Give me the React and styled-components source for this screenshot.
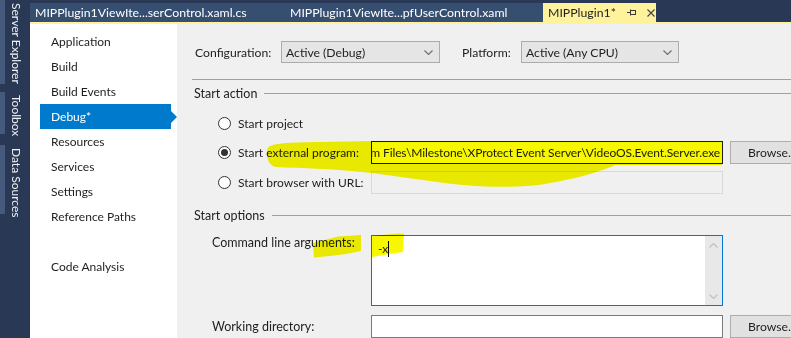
import React from 'react';
import styled, { createGlobalStyle } from 'styled-components';

const FONT = `Lato, "Noto Sans", "DejaVu Sans", sans-serif`;

const Global = createGlobalStyle`
  html, body { margin: 0; padding: 0; background: #293955; }
  body { font-family: ${FONT}; font-size: 12px; color: #1e1e1e; }
  * { box-sizing: border-box; }
`;

const Frame = styled.div`
  position: relative;
  width: 791px;
  height: 338px;
  overflow: hidden;
  display: flex;
  background: #293955;
`;

const SideStrip = styled.div`
  width: 30px;
  flex: none;
  display: flex;
  flex-direction: column;
  background: #293955;
`;

const SideTab = styled.div`
  writing-mode: vertical-rl;
  height: ${(p) => p.$h}px;
  margin-top: ${(p) => p.$mt || 0}px;
  border-left: 5px solid #465a7e;
  padding: 3px 6px 0 0;
  line-height: 16px;
  color: #f1f1f1;
  font-size: 12px;
  white-space: nowrap;
`;

const Main = styled.div`
  flex: 1;
  min-width: 0;
  display: flex;
  flex-direction: column;
`;

const TabBar = styled.div`
  height: 24px;
  flex: none;
  padding-top: 3px;
  display: flex;
  background: #293955;
  border-bottom: 2px solid #fff29d;
`;

const DocTab = styled.div`
  width: ${(p) => p.$w}px;
  height: 19px;
  line-height: 19px;
  padding-left: 5px;
  display: flex;
  align-items: center;
  gap: 11px;
  white-space: nowrap;
  overflow: hidden;
  font-size: 12.3px;
  background: ${(p) => (p.$active ? '#fff29d' : '#364e6f')};
  color: ${(p) => (p.$active ? '#1e1e1e' : '#ffffff')};
`;

const Body = styled.div`
  flex: 1;
  display: flex;
  min-height: 0;
`;

const Nav = styled.div`
  width: 147px;
  flex: none;
  background: #ffffff;
  padding: 5px 6px 0 10px;
`;

const NavItem = styled.div`
  position: relative;
  height: 25px;
  line-height: 25px;
  padding-left: 11px;
  background: ${(p) => (p.$active ? '#007acc' : 'transparent')};
  color: ${(p) => (p.$active ? '#ffffff' : '#1e1e1e')};
  ${(p) =>
    p.$active &&
    `&::after {
      content: '';
      position: absolute;
      right: -6px;
      top: 6.5px;
      border-top: 6px solid transparent;
      border-bottom: 6px solid transparent;
      border-left: 6px solid #007acc;
    }`}
`;

const NavSpacer = styled.div`
  height: 25px;
`;

const Content = styled.div`
  flex: 1;
  min-width: 0;
  overflow: hidden;
  background: #f0f0f0;
  padding: 17px 0 0 15px;
  display: flex;
  flex-direction: column;
`;

const ConfigRow = styled.div`
  display: flex;
  align-items: center;
  height: 22px;
  padding-left: 3px;
  font-size: 12.2px;
`;

const FieldLabel = styled.span`
  width: ${(p) => p.$w}px;
  flex: none;
  white-space: nowrap;
`;

const Select = styled.div`
  width: ${(p) => p.$w}px;
  margin-right: ${(p) => p.$mr || 0}px;
  height: 22px;
  flex: none;
  border: 1px solid #acacac;
  background: #e5e5e5;
  display: flex;
  align-items: center;
  justify-content: space-between;
  padding: 0 6px 0 4px;
`;

const Separator = styled.div`
  margin-top: 16px;
  height: 1px;
  background: #a0a0a0;
`;

const GroupHeader = styled.div`
  margin-top: ${(p) => p.$mt}px;
  height: 16px;
  display: flex;
  align-items: center;
  gap: 7px;
  padding-left: 2px;
  font-size: 12.5px;
  white-space: nowrap;
  &::after {
    content: '';
    flex: 1;
    height: 1px;
    background: #a0a0a0;
  }
`;

const FormGrid = styled.div`
  margin-top: ${(p) => p.$mt}px;
  padding-left: ${(p) => p.$pl}px;
  display: grid;
  grid-template-columns: ${(p) => p.$first}px 352px 80px;
  grid-template-rows: ${(p) => p.$rows};
  column-gap: 7px;
  row-gap: ${(p) => p.$rg}px;
`;

const RadioLabel = styled.label`
  grid-column: 1;
  display: flex;
  align-items: center;
  gap: 7px;
  white-space: nowrap;
  margin-right: -7px;
`;

const RadioCircle = styled.span`
  width: 13px;
  height: 13px;
  flex: none;
  border-radius: 50%;
  border: 1px solid #333333;
  background: #ffffff;
  display: flex;
  align-items: center;
  justify-content: center;
  &::after {
    content: '';
    width: 7px;
    height: 7px;
    border-radius: 50%;
    background: ${(p) => (p.$checked ? '#333333' : 'transparent')};
  }
`;

const TextBox = styled.div`
  grid-column: 2;
  height: 23px;
  border: 1px solid ${(p) => p.$border};
  background: ${(p) => p.$bg || '#ffffff'};
  display: flex;
  align-items: center;
  justify-content: flex-end;
  overflow: hidden;
  white-space: nowrap;
  padding-right: 2px;
  letter-spacing: -0.12px;
`;

const Button = styled.div`
  grid-column: 3;
  height: 23px;
  border: 1px solid #adadad;
  background: #e1e1e1;
  display: flex;
  align-items: center;
  padding-left: 17px;
  white-space: nowrap;
  font-size: 12.2px;
`;

const OptLabel = styled.span`
  grid-column: 1;
  white-space: nowrap;
  line-height: 16px;
  font-size: 12.5px;
  align-self: ${(p) => p.$align || 'center'};
  margin-right: -7px;
`;

const TextArea = styled.div`
  grid-column: 2;
  height: 71px;
  border: 1px solid #0078d7;
  background: #ffffff;
  display: flex;
`;

const AreaText = styled.div`
  flex: 1;
  padding: 5px 0 0 6px;
  line-height: 16px;
  display: flex;
  align-items: flex-start;
`;

const Caret = styled.span`
  display: inline-block;
  width: 1px;
  height: 16px;
  background: #000000;
`;

const ScrollBar = styled.div`
  width: 17px;
  flex: none;
  background: #e8e8e8;
  display: flex;
  flex-direction: column;
  justify-content: space-between;
  align-items: center;
  padding: 7px 0 6px;
`;

const Spacer = styled.div`
  grid-column: 3;
`;

const Highlights = styled.svg`
  position: absolute;
  inset: 0;
  pointer-events: none;
  mix-blend-mode: multiply;
`;

const Chevron = () => (
  <svg width="9" height="5" viewBox="0 0 9 5">
    <path d="M0.5 0.5 L4.5 4.5 L8.5 0.5" fill="none" stroke="#6d6d6d" strokeWidth="1.1" />
  </svg>
);

const ScrollChevron = ({ up }) => (
  <svg width="9" height="5" viewBox="0 0 9 5">
    <path
      d={up ? 'M0.5 4.5 L4.5 0.5 L8.5 4.5' : 'M0.5 0.5 L4.5 4.5 L8.5 0.5'}
      fill="none"
      stroke="#c2c2c2"
      strokeWidth="1.3"
    />
  </svg>
);

const PinIcon = () => (
  <svg width="9" height="7" viewBox="0 0 9 7">
    <path d="M0 3.5 H3 M3.5 0.5 V6.5" stroke="#3a3a3a" strokeWidth="1" fill="none" />
    <rect x="3.5" y="1.5" width="5" height="4" fill="none" stroke="#3a3a3a" strokeWidth="1" />
  </svg>
);

const CloseIcon = () => (
  <svg width="8" height="8" viewBox="0 0 8 8">
    <path d="M0.5 0.5 L7.5 7.5 M7.5 0.5 L0.5 7.5" stroke="#4a4a4a" strokeWidth="1.3" />
  </svg>
);

const navItems = [
  'Application',
  'Build',
  'Build Events',
  'Debug*',
  'Resources',
  'Services',
  'Settings',
  'Reference Paths',
  null,
  'Code Analysis',
];

export default function App() {
  return (
    <>
      <Global />
      <Frame>
        <SideStrip>
          <SideTab $h={84}>Server Explorer</SideTab>
          <SideTab $h={42} $mt={8}>Toolbox</SideTab>
          <SideTab $h={69} $mt={11}>Data Sources</SideTab>
        </SideStrip>
        <Main>
          <TabBar>
            <DocTab $w={255}>MIPPlugin1ViewIte...serControl.xaml.cs</DocTab>
            <DocTab $w={258}>MIPPlugin1ViewIte...pfUserControl.xaml</DocTab>
            <DocTab $w={113} $active>
              <span>MIPPlugin1*</span>
              <PinIcon />
              <CloseIcon />
            </DocTab>
          </TabBar>
          <Body>
            <Nav>
              {navItems.map((n, i) =>
                n ? (
                  <NavItem key={i} $active={n === 'Debug*'}>
                    {n}
                  </NavItem>
                ) : (
                  <NavSpacer key={i} />
                )
              )}
            </Nav>
            <Content>
              <ConfigRow>
                <FieldLabel $w={86}>Configuration:</FieldLabel>
                <Select $w={159} $mr={22}>
                  <span>Active (Debug)</span>
                  <Chevron />
                </Select>
                <FieldLabel $w={59}>Platform:</FieldLabel>
                <Select $w={158}>
                  <span>Active (Any CPU)</span>
                  <Chevron />
                </Select>
              </ConfigRow>
              <Separator />
              <GroupHeader $mt={6}>Start action</GroupHeader>
              <FormGrid $mt={13} $pl={26} $first={146} $rg={7} $rows="20px 23px 23px">
                <RadioLabel>
                  <RadioCircle />
                  Start project
                </RadioLabel>
                <Spacer />
                <RadioLabel>
                  <RadioCircle $checked />
                  Start external program:
                </RadioLabel>
                <TextBox $border="#1e1e1e">
                  m Files\Milestone\XProtect Event Server\VideoOS.Event.Server.exe
                </TextBox>
                <Button>Browse...</Button>
                <RadioLabel>
                  <RadioCircle />
                  Start browser with URL:
                </RadioLabel>
                <TextBox $border="#d9d9d9" $bg="#f0f0f0" />
              </FormGrid>
              <GroupHeader $mt={14}>Start options</GroupHeader>
              <FormGrid $mt={12} $pl={20} $first={152} $rg={9} $rows="71px 23px">
                <OptLabel $align="start">Command line arguments:</OptLabel>
                <TextArea>
                  <AreaText>
                    -x
                    <Caret />
                  </AreaText>
                  <ScrollBar>
                    <ScrollChevron up />
                    <ScrollChevron />
                  </ScrollBar>
                </TextArea>
                <Spacer />
                <OptLabel>Working directory:</OptLabel>
                <TextBox $border="#7a7a7a" />
                <Button>Browse...</Button>
              </FormGrid>
            </Content>
          </Body>
        </Main>
        <Highlights width="791" height="338" viewBox="0 0 791 338">
          <path
            fill="#f7f700"
            d="M268 148 C270 143 290 142.5 320 142 L372 141 L722 141 L722 165 L615 165 C602 171 580 178 545 184 C512 189 470 187 430 181 C400 177 382 174 362 172 C332 169 302 168 276 167 C267 166 265 152 268 148 Z"
          />
          <path fill="#f7f700" d="M313 243 L338 236.5 L361 235 L361 251 L346 254 L330 256 L314 257.5 Z" />
          <path fill="#f7f700" d="M372 236 L398 233.5 L404 234 L403 252 L392 253.5 L372 257 Z" />
        </Highlights>
      </Frame>
    </>
  );
}
